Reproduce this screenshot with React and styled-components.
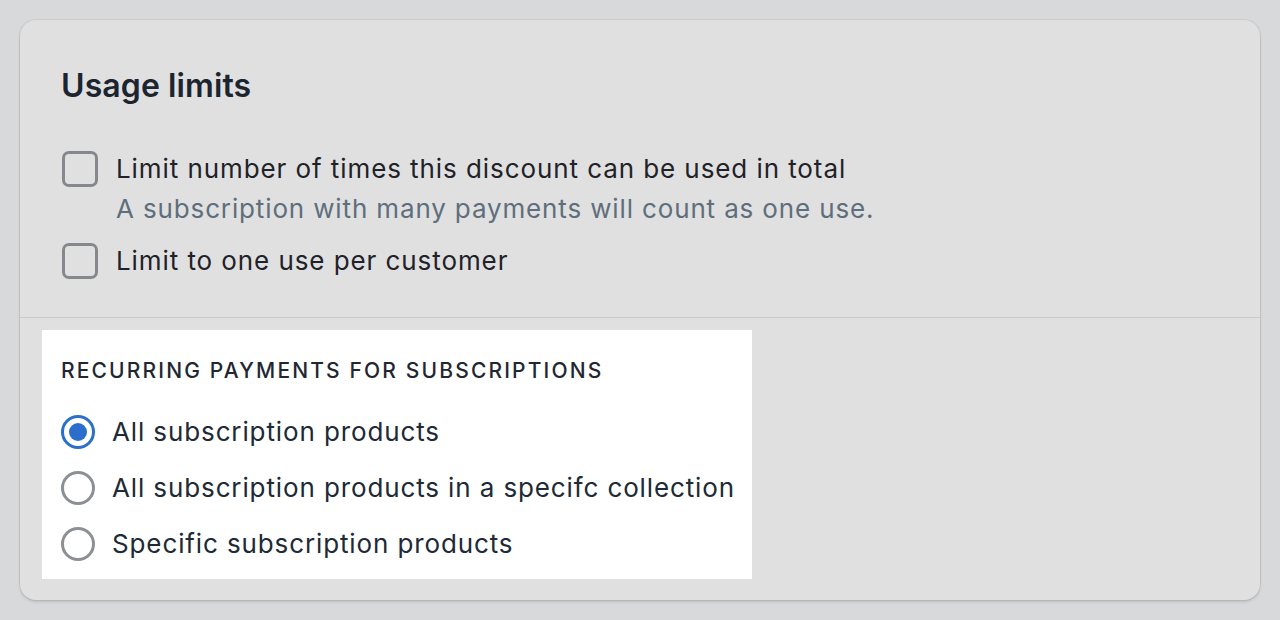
import React, { useState } from "react";
import styled, { createGlobalStyle } from "styled-components";

const Global = createGlobalStyle`
  html, body {
    margin: 0;
    padding: 0;
    background: #d8d9db;
    font-family: Inter, "Noto Sans", sans-serif;
    color: #1f2733;
  }
`;

const Page = styled.div`
  padding: 20px;
  box-sizing: border-box;
`;

const Card = styled.div`
  background: #e0e0e0;
  border-radius: 16px;
  box-shadow: 0 0 0 1px rgba(0, 0, 0, 0.06), 0 2px 3px rgba(0, 0, 0, 0.12);
  height: 580px;
  box-sizing: border-box;
  overflow: hidden;
`;

const Section = styled.div`
  padding: 40px 42px 38px 41px;
  border-bottom: 1px solid #c9cacc;
`;

const Title = styled.h2`
  margin: 0 0 39px;
  font-size: 32px;
  line-height: 52px;
  font-weight: 600;
  letter-spacing: 0.1px;
  color: #1c2430;
`;

const List = styled.div`
  display: flex;
  flex-direction: column;
  gap: 14px;
`;

const Row = styled.label`
  display: flex;
  align-items: flex-start;
  gap: 18px;
  padding-left: 1px;
  cursor: pointer;
`;

const Box = styled.span`
  width: 36px;
  height: 36px;
  box-sizing: border-box;
  border: 3px solid #85888c;
  border-radius: 7px;
  flex-shrink: 0;
`;

const Texts = styled.div`
  display: flex;
  flex-direction: column;
  white-space: nowrap;
`;

const Label = styled.span`
  font-size: 26px;
  line-height: 36px;
  letter-spacing: 0.92px;
  color: #1f2228;
`;

const Help = styled.span`
  margin-top: 2px;
  font-size: 26px;
  line-height: 40px;
  letter-spacing: 0.86px;
  color: #5f6e7c;
`;

const Lower = styled.div`
  padding: 12px 22px 21px;
`;

const White = styled.div`
  width: 710px;
  background: #ffffff;
  box-sizing: border-box;
  padding: 26px 19px 15px;
`;

const Heading = styled.div`
  font-size: 21px;
  line-height: 30px;
  font-weight: 500;
  letter-spacing: 2.15px;
  text-transform: uppercase;
  white-space: nowrap;
  color: #1f2733;
  margin-bottom: 26px;
`;

const Radios = styled.div`
  display: flex;
  flex-direction: column;
  gap: 16px;
`;

const RadioRow = styled.label`
  display: flex;
  align-items: center;
  gap: 17px;
  height: 40px;
  cursor: pointer;
`;

const Circle = styled.span`
  width: 34px;
  height: 34px;
  box-sizing: border-box;
  border-radius: 50%;
  border: 3px solid ${({ checked }) => (checked ? "#2c6ecb" : "#8c9095")};
  display: flex;
  align-items: center;
  justify-content: center;
  flex-shrink: 0;
  &::after {
    content: "";
    width: 18px;
    height: 18px;
    border-radius: 50%;
    background: ${({ checked }) => (checked ? "#2c6ecb" : "transparent")};
  }
`;

const RadioText = styled.span`
  font-size: 26px;
  line-height: 40px;
  letter-spacing: 0.88px;
  white-space: nowrap;
  color: #202a36;
`;

const options = [
  "All subscription products",
  "All subscription products in a specifc collection",
  "Specific subscription products",
];

const App = () => {
  const [selected, setSelected] = useState(0);

  return (
    <Page>
      <Global />
      <Card>
        <Section>
          <Title>Usage limits</Title>
          <List>
            <Row>
              <Box />
              <Texts>
                <Label>Limit number of times this discount can be used in total</Label>
                <Help>A subscription with many payments will count as one use.</Help>
              </Texts>
            </Row>
            <Row>
              <Box />
              <Texts>
                <Label>Limit to one use per customer</Label>
              </Texts>
            </Row>
          </List>
        </Section>
        <Lower>
          <White>
            <Heading>Recurring payments for subscriptions</Heading>
            <Radios>
              {options.map((o, i) => (
                <RadioRow key={o} onClick={() => setSelected(i)}>
                  <Circle checked={selected === i} />
                  <RadioText>{o}</RadioText>
                </RadioRow>
              ))}
            </Radios>
          </White>
        </Lower>
      </Card>
    </Page>
  );
};

export default App;
